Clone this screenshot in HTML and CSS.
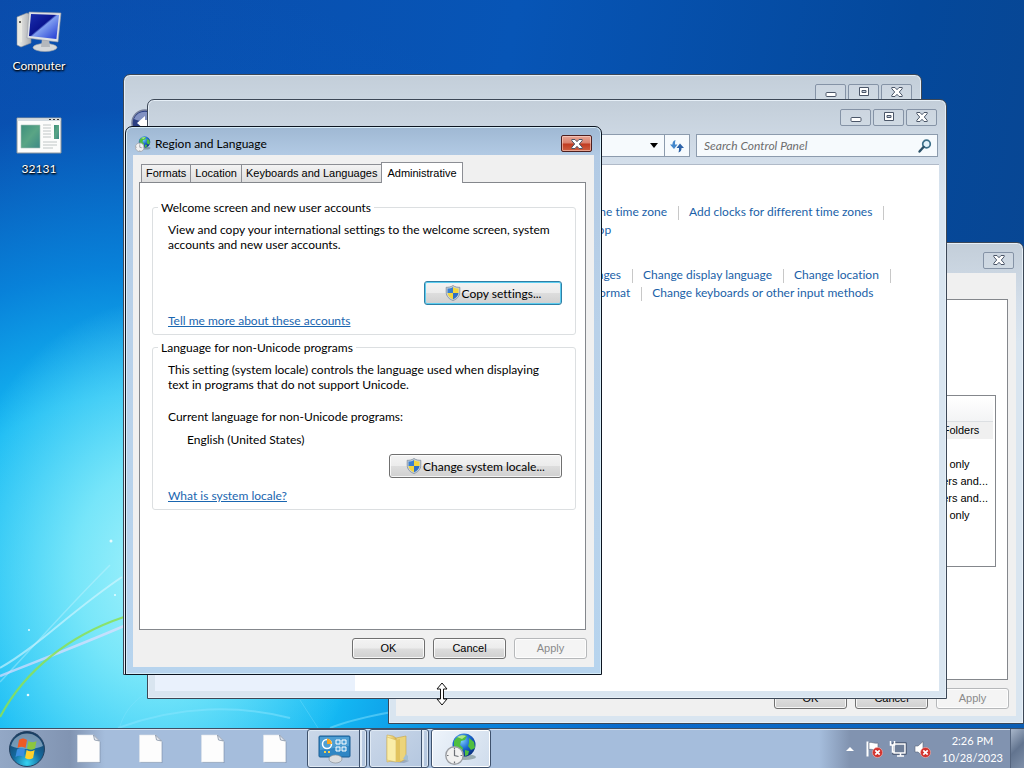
FILE: index.html
```html
<!DOCTYPE html>
<html lang="en">
<head>
<meta charset="utf-8">
<title>Region and Language</title>
<link rel="stylesheet" href="styles.css">
</head>
<body>
<svg class="defs" aria-hidden="true">
  <defs>
    <linearGradient id="screen" x1="0" y1="0" x2="1" y2="1"><stop offset="0" stop-color="#1a2fae"/><stop offset=".45" stop-color="#0a1590"/><stop offset=".5" stop-color="#7f9df0"/><stop offset="1" stop-color="#1c35d0"/></linearGradient>
    <linearGradient id="case" x1="0" y1="0" x2="1" y2="0"><stop offset="0" stop-color="#f4f4f0"/><stop offset="1" stop-color="#a9abaf"/></linearGradient>
    <radialGradient id="globe" cx=".4" cy=".3" r=".75"><stop offset="0" stop-color="#7fd0ff"/><stop offset=".5" stop-color="#1a68cf"/><stop offset="1" stop-color="#062a78"/></radialGradient>
    <radialGradient id="orb" cx=".5" cy=".9" r=".9"><stop offset="0" stop-color="#35d3f2"/><stop offset=".45" stop-color="#146a9e"/><stop offset="1" stop-color="#183a5e"/></radialGradient>
    <linearGradient id="folder" x1="0" y1="0" x2="1" y2="0"><stop offset="0" stop-color="#fdf3b6"/><stop offset="1" stop-color="#dcb84f"/></linearGradient>
    <linearGradient id="green" x1="0" y1="0" x2="1" y2="1"><stop offset="0" stop-color="#3d8f7c"/><stop offset=".5" stop-color="#5aa585"/><stop offset="1" stop-color="#3d8a86"/></linearGradient>
    <symbol id="i-shield" viewBox="0 0 16 16">
      <path d="M8 .5C6 2 3.500 2.400 1.200 2.300V7c0 4.500 3 7.200 6.800 8.500 3.800-1.300 6.800-4 6.800-8.500V2.300C12.500 2.400 10 2 8 .5z" fill="#c9d3dc" stroke="#7f8c99" stroke-width=".8"/>
      <path d="M8 2C6.400 3 4.600 3.500 2.500 3.500V8H8z" fill="#3a7fcf"/><path d="M8 2c1.600 1 3.400 1.500 5.500 1.500V8H8z" fill="#f3d63c"/>
      <path d="M2.500 8c.3 3 2.500 5 5.500 6.200V8z" fill="#f3d63c"/><path d="M13.500 8c-.3 3-2.500 5-5.500 6.200V8z" fill="#2f6fc4"/>
    </symbol>
    <symbol id="i-region" viewBox="0 0 32 32">
      <ellipse cx="20" cy="24" rx="11" ry="3" fill="#3a5a50" opacity=".4"/>
      <circle cx="19" cy="12" r="11.500" fill="url(#globe)"/>
      <path d="M9 8c3-5 9-7 13-5l-2 4-4 1-1 4 3 3-1 5c-3-1-4-6-8-7zM24 5l5 4 1 6-4 2-3-4 1-3zM20 17l4 1-1 4-3 1z" fill="#4fbf3f"/>
      <path d="M12 4c3-2 7-2 9-1l-4 3z" fill="#d9f7a8" opacity=".7"/>
      <circle cx="9.500" cy="22.500" r="8.700" fill="#f1f1f1" stroke="#9b9ea3" stroke-width="1.400"/>
      <path d="M9.500 17v5.500l4 1M9.500 14.800v1.600M9.500 28.600v1.600M1.900 22.500h1.600M15.600 22.500h1.600" fill="none" stroke="#6d7177" stroke-width="1.200"/>
    </symbol>
    <symbol id="i-min" viewBox="0 0 12 12"><rect x="1" y="6.500" width="10" height="4" rx="1" fill="#fff" stroke="#4b5668"/></symbol>
    <symbol id="i-max" viewBox="0 0 12 12"><path d="M1.500 1.500h9v8h-9z" fill="#fff" stroke="#4b5668"/><path d="M4 4.500h4v2H4z" fill="#c6d0de" stroke="#4b5668"/></symbol>
    <symbol id="i-x" viewBox="0 0 12 12"><path d="M.8 1.500h3.200L6 3.700l2-2.200h3.200v1.200L8.300 6l2.900 3.300v1.200H8L6 8.300l-2 2.200H.8V9.300L3.700 6 .8 2.700z" fill="#fff" stroke="#4b5668" stroke-width="1"/></symbol>
    <symbol id="i-file" viewBox="0 0 24 30">
      <path d="M1.500 2h16l6 6v21h-22z" fill="#66758c" opacity=".45"/>
      <path d="M.5 1h16l6 6v21H.5z" fill="#fdfdfd" stroke="#dfe4ea" stroke-width=".6"/>
      <path d="M16.500 1l6 6-5-1z" fill="#e3e8ef" stroke="#8492a6" stroke-width=".8"/>
    </symbol>
    <symbol id="i-error" viewBox="0 0 10 10"><circle cx="5" cy="5" r="4.600" fill="#d2322d" stroke="#f0b0ac" stroke-width=".6"/><path d="M3 3l4 4M7 3L3 7" stroke="#fff" stroke-width="1.500"/></symbol>
  </defs>
</svg>

<main class="desktop">
  <svg class="wallpaper" viewBox="0 0 400 240" aria-hidden="true">
    <g fill="none">
      <path d="M0 148C40 125 70 92 122 57" stroke="#d8f6ff" stroke-width="2" opacity=".6"/>
      <path d="M0 162C35 125 65 90 110 45" stroke="#d8f6ff" stroke-width="1.500" opacity=".35"/>
      <path d="M0 156C40 140 80 125 124 106" stroke="#eadcff" stroke-width="2.500" opacity=".65"/>
      <path d="M0 197C25 150 70 115 124 97" stroke="#8ce052" stroke-width="2.200" opacity=".85"/>
      <path d="M118 208C180 185 240 185 290 198M330 208C350 200 370 196 392 192" stroke="#8fe6ff" stroke-width="2" opacity=".45"/>
      <path d="M120 206C125 190 135 180 148 172M300 180l18 28" stroke="#8fe6ff" opacity=".3"/>
    </g>
    <g fill="#e8fcff"><circle cx="111" cy="21" r="1.500"/><circle cx="115" cy="75" r="1"/><circle cx="29" cy="110" r="1"/><circle cx="28" cy="175" r="1.300"/></g>
  </svg>
  <ul class="shortcuts">
    <li class="shortcut">
      <svg class="shortcut-icon" viewBox="0 0 48 44" aria-hidden="true">
        <path d="M2 9l10-4 4 2v28l-10 4-4-2z" fill="url(#case)" stroke="#8b8f95" stroke-width=".6"/>
        <path d="M3 11l4-1v24l-4 1z" fill="#e9e9e2"/><circle cx="5" cy="14" r="1" fill="#333"/>
        <ellipse cx="30" cy="39.500" rx="12" ry="4" fill="#d5d8da" stroke="#9ea3a8" stroke-width=".6"/>
        <path d="M27 31h7l1 8h-9z" fill="#b4b8bd"/>
        <path d="M14 4l32 1-3 29-31-4z" fill="#dfe2e6" stroke="#9399a3" stroke-width=".6"/>
        <path d="M16 6l28 1-2.600 24L14 28z" fill="url(#screen)"/>
      </svg>
      <span>Computer</span>
    </li>
    <li class="shortcut">
      <svg class="shortcut-icon" viewBox="0 0 48 44" aria-hidden="true">
        <path d="M2 7h44v35H2z" fill="#fcfcfb" stroke="#8f979c"/>
        <path d="M2.500 7.500h43V10h-43z" fill="#d3dbe0"/><path d="M34 8.500h2M38 8.500h2M42 8.500h2" stroke="#333"/>
        <path d="M6 14h19v23H6z" fill="url(#green)" stroke="#a9c0b8" stroke-width=".6"/>
        <path d="M28 14h8M28 17h8M28 20h8M28 23h8M28 26h8M28 31h14M28 34h14M28 37h10" stroke="#c0c6c6"/>
        <path d="M39 14h5v14h-5z" fill="url(#green)"/>
      </svg>
      <span>32131</span>
    </li>
  </ul>

  <section class="window window-props" aria-label="Properties">
    <header class="titlebar"><div class="caption-buttons"><button class="cap" aria-label="Close"><svg><use href="#i-x"/></svg></button></div></header>
    <div class="client props-client">
      <div class="props-page">
        <div class="listbox">
          <table class="entries">
            <thead><tr><th>&nbsp;</th></tr></thead>
            <tbody>
              <tr class="shaded"><td>Files and Folders</td></tr>
              <tr><td>&nbsp;</td></tr>
              <tr><td>This folder only</td></tr>
              <tr class="cut"><td>Subfolders and...</td></tr>
              <tr class="cut"><td>Subfolders and...</td></tr>
              <tr><td>This folder only</td></tr>
            </tbody>
          </table>
        </div>
      </div>
      <div class="actions"><button class="btn">OK</button><button class="btn">Cancel</button><button class="btn" disabled>Apply</button></div>
    </div>
  </section>

  <section class="window window-back" aria-label="Folder">
    <header class="titlebar">
      <div class="caption-buttons"><button class="cap" aria-label="Minimize"><svg><use href="#i-min"/></svg></button><button class="cap" aria-label="Maximize"><svg><use href="#i-max"/></svg></button><button class="cap" aria-label="Close"><svg><use href="#i-x"/></svg></button></div>
    </header>
    <div class="navbar">
      <button class="back" aria-label="Back"><svg viewBox="0 0 28 28"><circle cx="14" cy="14" r="13" fill="#2b3f83" stroke="#77809c" stroke-width="1.500"/><path d="M3 10a12 12 0 0 1 22 0c-6 3-16 3-22 0z" fill="#a8b6de" opacity=".7"/><path d="M14 7v4h8v6h-8v4l-8-7z" fill="#fff"/></svg></button>
    </div>
    <div class="client"></div>
  </section>

  <section class="window window-panel" aria-label="Control Panel">
    <header class="titlebar">
      <div class="caption-buttons"><button class="cap" aria-label="Minimize"><svg><use href="#i-min"/></svg></button><button class="cap" aria-label="Maximize"><svg><use href="#i-max"/></svg></button><button class="cap" aria-label="Close"><svg><use href="#i-x"/></svg></button></div>
    </header>
    <div class="navbar">
      <div class="address">
        <span class="drop"></span>
        <button class="refresh" aria-label="Refresh"><svg viewBox="0 0 16 16"><path d="M6.500 2C4 2.500 3.500 4.500 3.500 6.500H1L5 11l3.500-4.500H6C6 5 6 3.500 6.500 2z" fill="#4387cc"/><path d="M9.500 14.500c2.500-.5 3-2.500 3-4.500H15l-4-4.500L7.500 10H10c0 1.500 0 3-.5 4.500z" fill="#2c62a8"/></svg></button>
      </div>
      <div class="search">
        <input type="text" aria-label="Search Control Panel" placeholder="Search Control Panel">
        <svg viewBox="0 0 16 16" aria-hidden="true"><circle cx="9.500" cy="6" r="3.800" fill="#e3f2fa" stroke="#3d7089" stroke-width="1.700"/><path d="M6.500 9L2.500 13.500" stroke="#2b5168" stroke-width="2.400" stroke-linecap="round"/></svg>
      </div>
    </div>
    <div class="client panel-client">
      <nav class="side"></nav>
      <div class="tasks">
        <div class="task-group">
          <div class="task-row indented"><a href="#">the time zone</a><a href="#">Add clocks for different time zones</a></div>
          <div class="task-row last"><a href="#">desktop</a></div>
        </div>
        <div class="task-group">
          <div class="task-row"><a href="#">languages</a><a href="#">Change display language</a><a href="#">Change location</a></div>
          <div class="task-row indented last"><a href="#">format</a><a href="#">Change keyboards or other input methods</a></div>
        </div>
      </div>
    </div>
  </section>

  <section class="window window-dialog" role="dialog" aria-labelledby="dialog-title">
    <header class="titlebar">
      <svg class="title-icon" aria-hidden="true"><use href="#i-region"/></svg>
      <h1 id="dialog-title">Region and Language</h1>
      <button class="cap cap-close" aria-label="Close"><svg><use href="#i-x"/></svg></button>
    </header>
    <div class="client dialog-client">
      <div class="tabs" role="tablist">
        <button class="tab" role="tab">Formats</button><button class="tab" role="tab">Location</button><button class="tab" role="tab">Keyboards and Languages</button><button class="tab active" role="tab" aria-selected="true">Administrative</button>
      </div>
      <div class="page" role="tabpanel">
        <fieldset class="group">
          <legend>Welcome screen and new user accounts</legend>
          <p>View and copy your international settings to the welcome screen, system<br>accounts and new user accounts.</p>
          <button class="btn btn-shield btn-copy"><svg aria-hidden="true"><use href="#i-shield"/></svg>Copy settings...</button>
          <a class="help help-accounts" href="#">Tell me more about these accounts</a>
        </fieldset>
        <fieldset class="group">
          <legend>Language for non-Unicode programs</legend>
          <p>This setting (system locale) controls the language used when displaying<br>text in programs that do not support Unicode.</p>
          <p class="current">Current language for non-Unicode programs:</p>
          <p class="value">English (United States)</p>
          <button class="btn btn-shield btn-locale"><svg aria-hidden="true"><use href="#i-shield"/></svg>Change system locale...</button>
          <a class="help help-locale" href="#">What is system locale?</a>
        </fieldset>
      </div>
      <div class="actions"><button class="btn">OK</button><button class="btn">Cancel</button><button class="btn" disabled>Apply</button></div>
    </div>
  </section>

  <svg class="pointer" viewBox="0 0 14 24" aria-hidden="true"><path d="M7 1l5 6H8.500v10h3.500l-5 6-5-6h3.500V7H2z" fill="#fff" stroke="#111" stroke-linejoin="round"/></svg>
</main>

<footer class="taskbar">
  <button class="start" aria-label="Start"><svg viewBox="0 0 38 38">
    <circle cx="19" cy="19" r="17.500" fill="url(#orb)" stroke="#24405f"/>
    <path d="M3 16a16.500 16.500 0 0 1 32 0c-8 4-24 4-32 0z" fill="#cfe0ee" opacity=".5"/>
    <path d="M11 10c3-2 5-2 8 0l-1.500 8c-3-1.600-5-1.600-8 0z" fill="#ee5a24"/><path d="M20.500 11c3 1.600 5 1.600 8 0L27 18.500c-3 1.700-5 1.600-8 0z" fill="#8cc63e"/>
    <path d="M9 19.500c3-1.600 5-1.600 8 0L15.500 27c-3-1.600-5-1.600-8 0z" fill="#3b8ee0"/><path d="M18.600 20c3 1.600 5 1.600 8 0l-1.500 8c-3 1.600-5 1.600-8 0z" fill="#ffd12c"/>
  </svg></button>
  <button class="pin" aria-label="File"><svg><use href="#i-file"/></svg></button>
  <button class="pin" aria-label="File"><svg><use href="#i-file"/></svg></button>
  <button class="pin" aria-label="File"><svg><use href="#i-file"/></svg></button>
  <button class="pin" aria-label="File"><svg><use href="#i-file"/></svg></button>
  <div class="running">
    <button class="task stacked" aria-label="Control Panel"><svg viewBox="0 0 34 30">
      <rect x="1" y="2" width="31" height="21" rx="1" fill="#2f86c4" stroke="#1a5d93"/><path d="M2 3h29v9L2 16z" fill="#6bb5e2" opacity=".5"/>
      <circle cx="9" cy="10" r="4.500" fill="none" stroke="#fff" stroke-width="1.500"/><path d="M9 10V4.500a5.500 5.500 0 0 1 5 5.500z" fill="#f5a623"/>
      <path d="M18 6h4v4h-4zM24 6h4v4h-4zM18 13h4v4h-4zM24 13h4v4h-4z" fill="#4aa0d8" stroke="#fff"/><path d="M6 18h2M10 18h2" stroke="#f5d04a" stroke-width="2"/>
      <ellipse cx="17.500" cy="25" rx="6.500" ry="4" fill="#dadde0" stroke="#8d9298" stroke-width=".7"/>
    </svg></button>
    <button class="task stacked" aria-label="Explorer"><svg viewBox="0 0 34 30">
      <path d="M10 28l14 1 5-2-6-4z" fill="#6c7a8c" opacity=".4"/>
      <path d="M7 1l6 1 3 2v22l-9 2z" fill="url(#folder)" stroke="#cba94a" stroke-width=".6"/>
      <path d="M16 4l10-2v23l-6 3z" fill="#ecd47a" stroke="#c7a548" stroke-width=".6"/><path d="M7 3l9 3v22l-9-2z" fill="#faeda8" stroke="#d6b95c" stroke-width=".6"/><path d="M16 6l4-1v23l-4 0z" fill="#e2c35e"/><path d="M23 25l5 2v-5l-2-2z" fill="#a4bfd4"/>
    </svg></button>
    <button class="task current-task" aria-label="Region and Language"><svg><use href="#i-region"/></svg></button>
  </div>
  <div class="tray">
    <span class="chevron"></span>
    <svg class="tray-icon" viewBox="0 0 18 18"><path d="M2.500 1.500v15" stroke="#fff" stroke-width="2"/><path d="M4 2.500c3-1 5 1.500 9 .5v7c-4 1-6-1.500-9-.5z" fill="#fff" stroke="#5a6478" stroke-width=".6"/><use href="#i-error" x="7" y="7" width="11" height="11"/></svg>
    <svg class="tray-icon" viewBox="0 0 18 18"><path d="M5 4h11v9H5z" fill="#6f7f99" stroke="#2c3950" stroke-width="3"/><path d="M5 4h11v9H5z" fill="#6f7f99" stroke="#fff" stroke-width="1.500"/><path d="M8 16h7M11.500 13v3" stroke="#fff" stroke-width="1.500"/><path d="M1.500 1v4h4V1M3.500 5v7h2" fill="none" stroke="#fff" stroke-width="1.500"/></svg>
    <svg class="tray-icon" viewBox="0 0 18 18"><path d="M2 6h3l5-4.500v15L5 12H2z" fill="#fff" stroke="#5a6478" stroke-width=".6"/><use href="#i-error" x="7" y="7" width="11" height="11"/></svg>
    <time class="clock" datetime="2023-10-28T14:26"><span>2:26 PM</span><span>10/28/2023</span></time>
  </div>
  <button class="show-desktop" aria-label="Show desktop"></button>
</footer>
</body>
</html>
```
FILE: styles.css
```css
* { box-sizing: border-box; }
body {
  margin: 0;
  height: 100vh;
  display: flex;
  flex-direction: column;
  overflow: hidden;
  font: 12px/15px Lato, "Noto Sans", sans-serif;
  font-variant-ligatures: none;
  color: #000;
}
button, input { font: inherit; font-variant-ligatures: none; color: inherit; padding: 0; margin: 0; border: 0; background: none; }
h1, p, ul, fieldset, legend { margin: 0; padding: 0; }
a { color: #1a5fa8; text-decoration: none; }
.defs { position: absolute; width: 0; height: 0; }

.desktop {
  flex: 1;
  position: relative;
  overflow: hidden;
  background:
    radial-gradient(ellipse 210px 270px at 160px 570px, #a4f2fb 0, rgba(135, 236, 250, .85) 40%, rgba(60, 210, 246, 0) 100%),
    radial-gradient(ellipse 640px 640px at 130px 620px, #20c8f7 0, #14b8f3 35%, rgba(8, 135, 222, .9) 55%, rgba(6, 90, 190, .3) 80%, rgba(8, 80, 180, 0) 100%),
    radial-gradient(ellipse 1100px 180px at 500px 740px, rgba(12, 120, 220, .9) 0, rgba(12, 110, 215, 0) 100%),
    linear-gradient(100deg, #0a4cab 0, #0755b6 45%, #04489b 80%, #0a4690 100%);
}
.wallpaper { position: absolute; left: 0; bottom: -32px; width: 400px; height: 240px; }

.shortcuts { list-style: none; position: absolute; top: 8px; left: 1px; display: flex; flex-direction: column; gap: 38px; width: 76px; }
.shortcut { display: flex; flex-direction: column; align-items: center; gap: 6px; color: #fff; text-shadow: 1px 1px 2px #000, 0 1px 2px #000; }
.shortcut-icon { width: 48px; height: 44px; }

.window {
  position: absolute;
  display: flex;
  flex-direction: column;
  padding: 0 7px 7px;
  border: 1px solid #3c4756;
  border-radius: 7px 7px 0 0;
  background: linear-gradient(#c3ced9 0, #d3deea 60px, #d9e5f0 100px);
  box-shadow: inset 0 0 0 1px #e6eff7;
}
.titlebar { display: flex; align-items: center; }
.caption-buttons { display: flex; gap: 2px; margin-left: auto; }
.cap { width: 31px; height: 17px; display: grid; place-items: center; border: 1px solid #8593a6; border-radius: 2px; background: rgba(255, 255, 255, .12); }
.cap svg { width: 12px; height: 12px; }
.client { flex: 1; background: #fff; }
.navbar { display: flex; }

.window-props { left: 388px; top: 242px; width: 636px; height: 482px; }
.window-props .titlebar { height: 30px; padding: 4px 2px 0 0; }
.props-client { display: flex; flex-direction: column; padding: 26px 8px 7px; background: #f0f0f0; }
.props-page { flex: 1; display: flex; flex-direction: column; align-items: flex-end; border: 1px solid #84878c; background: #fff; padding: 95px 11px 0 0; }
.listbox { width: 540px; height: 172px; border: 1px solid #84878c; padding: 1px 2px 0 0; }
.entries { margin-left: auto; width: 98px; border-collapse: collapse; font-family: "Liberation Sans", sans-serif; font-size: 11px; }
.entries th, .entries td { padding: 0; height: 17px; white-space: nowrap; }
.entries th { height: 24px; background: linear-gradient(#fff, #f3f4f5); border-bottom: 1px solid #dcdfe2; }
.entries .cut td { text-align: right; padding-right: 5px; }
.shaded td { background: #f0f0f0; height: 18px; }

.window-back { left: 123px; top: 74px; width: 799px; height: 601px; }
.window-back .titlebar, .window-panel .titlebar { height: 34px; padding-right: 2px; }
.window-back .navbar { height: 30px; }
.back { width: 28px; height: 28px; }
.back svg { width: 28px; height: 28px; }

.window-panel { left: 147px; top: 99px; width: 800px; height: 600px; }
.window-panel .navbar { height: 30px; padding: 0 1px 7px 0; gap: 6px; }
.address { flex: 1; display: flex; justify-content: flex-end; align-items: stretch; border: 1px solid #8c9bad; background: #f6fafd; }
.drop { align-self: center; margin-right: 6px; border: 4px solid transparent; border-top: 5px solid #000; border-bottom: 0; }
.refresh { width: 25px; border-left: 1px solid #8c9bad; display: grid; place-items: center; }
.refresh svg, .search svg { width: 16px; height: 16px; }
.search { width: 242px; display: flex; align-items: center; border: 1px solid #8c9bad; background: #f6fafd; padding: 0 4px 0 7px; }
.search input { flex: 1; min-width: 0; outline: 0; font-style: italic; }
.search input::placeholder { color: #6d6d6d; opacity: 1; }
.panel-client { display: flex; border-top: 1px solid #b0bac8; }
.side { width: 200px; background: #e9f1fc; }
.tasks { flex: 1; padding: 38px 0 0 214px; display: flex; flex-direction: column; gap: 27px; }
.task-row { display: flex; height: 18px; line-height: 18px; white-space: nowrap; }
.task-row.indented { padding-left: 26px; }
.task-row a::after { content: ""; display: inline-block; width: 1px; height: 14px; margin: 0 10px 0 11px; background: #c8c8c8; vertical-align: middle; }
.task-row.last a:last-child::after { content: none; }

.window-dialog {
  left: 125px; top: 126px; width: 477px; height: 549px;
  border-color: #0c1420;
  background: linear-gradient(#9fb8d3 0, #b2cae4 28px, #b9d1e9 200px, #b7d4ee 100%);
  box-shadow: inset 0 0 0 1px #d6ecf8;
}
.window-dialog .titlebar { height: 28px; padding: 5px 2px 0 2px; gap: 4px; }
.title-icon { width: 16px; height: 16px; }
.titlebar h1 { flex: 1; font-size: 12px; font-weight: 400; line-height: 16px; }
.cap-close { border-color: #4d1f1f; background: linear-gradient(#e8a595 0, #d9806c 48%, #c03a20 52%, #cf6042 100%); box-shadow: inset 0 0 0 1px rgba(255, 220, 210, .55); }
.dialog-client { display: flex; flex-direction: column; padding: 7px 8px 8px 6px; background: #f0f0f0; }
.tabs { display: flex; align-items: flex-end; padding-left: 2px; font-family: "Liberation Sans", sans-serif; font-size: 11px; }
.tab { height: 18px; padding: 0 4px; border: 1px solid #8c8e94; border-width: 1px 0 0 1px; background: linear-gradient(#f3f3f3, #dedede); white-space: nowrap; }
.tab.active { height: 21px; margin-bottom: -1px; padding: 0 5px; border-right-width: 1px; background: #fff; position: relative; }
.page { flex: 1; padding: 17px 9px 0 12px; border: 1px solid #84878c; background: #fff; display: flex; flex-direction: column; gap: 5px; }
.group { border: 1px solid #dcdfe1; border-radius: 3px; padding: 7px 13px 6px 15px; }
.group legend { margin-left: -10px; padding: 0 3px; }
.group p { white-space: nowrap; }
.group .current { margin-top: 17px; }
.group .value { margin: 8px 0 0 19px; }
.help { display: block; width: max-content; color: #1a66b0; text-decoration: underline; }
.help-accounts { margin-top: 8px; }
.help-locale { margin-top: 10px; }

.btn {
  width: 73px; height: 21px;
  border: 1px solid #707070; border-radius: 3px;
  background: linear-gradient(#f3f3f3 0, #ececec 48%, #dddddd 52%, #d0d0d0 100%);
  box-shadow: inset 0 0 0 1px rgba(255, 255, 255, .8);
  font-family: "Liberation Sans", sans-serif;
  font-size: 11px;
}
.btn:disabled { border-color: #b6b8ba; background: #f4f4f4; color: #8a8a8a; }
.btn-shield { display: flex; align-items: center; justify-content: center; gap: 1px; height: 24px; margin-left: auto; font-family: inherit; font-size: 12px; }
.btn-shield svg { width: 16px; height: 16px; }
.btn-copy { width: 138px; margin-top: 29px; border-color: #2f7fa5; box-shadow: inset 0 0 0 1px #5ccdf0; }
.btn-locale { width: 173px; margin-top: 7px; }
.actions { display: flex; justify-content: flex-end; gap: 8px; padding-top: 8px; }
.dialog-client .actions, .props-client .actions { margin-right: -1px; }

.pointer { position: absolute; left: 435px; top: 682px; width: 14px; height: 24px; }

.taskbar {
  height: 40px;
  display: flex;
  align-items: stretch;
  border-top: 1px solid #3d4f66;
  box-shadow: inset 0 1px 0 #d4e0ee;
  background: linear-gradient(90deg, #93a8c6 0, #8194b2 70px, #a5bddc 105px, #a5bddc 80%, #8193b0 83%, #8193b0 100%);
}
.start { width: 54px; margin-right: 4px; display: grid; place-items: center; }
.start svg { width: 38px; height: 38px; }
.pin { width: 62px; display: grid; place-items: center; }
.pin svg { width: 24px; height: 30px; }
.running { display: flex; gap: 2px; margin-left: 1px; }
.task { position: relative; width: 60px; display: grid; place-items: center; border: 1px solid #3f526d; border-radius: 3px; background: linear-gradient(135deg, #cbd8e9, #b3c6df); box-shadow: inset 0 0 0 1px #dfe9f4; }
.task svg { width: 34px; height: 30px; }
.stacked { padding-right: 5px; }
.stacked::after { content: ""; position: absolute; top: 0; bottom: 0; right: 4px; width: 2px; background: #e3ecf6; border-left: 1px solid #3f526d; }
.current-task { background: linear-gradient(120deg, #eef4fb, #cfdcec); box-shadow: inset 0 0 0 1px #fff; }
.current-task svg { width: 32px; height: 32px; }
.tray { margin-left: auto; display: flex; align-items: center; gap: 6px; color: #fff; }
.chevron { border: 4px solid transparent; border-bottom: 4px solid #fff; border-top: 0; margin-right: 5px; }
.tray-icon { width: 18px; height: 18px; }
.clock { display: flex; flex-direction: column; align-items: center; font-size: 11px; line-height: 17px; margin: 0 7px 0 5px; }
.show-desktop { width: 14px; border: 1px solid #55657e; border-width: 0 0 0 1px; background: linear-gradient(135deg, #a9b7cb, #62748f 50%, #7f90a9); }
```
